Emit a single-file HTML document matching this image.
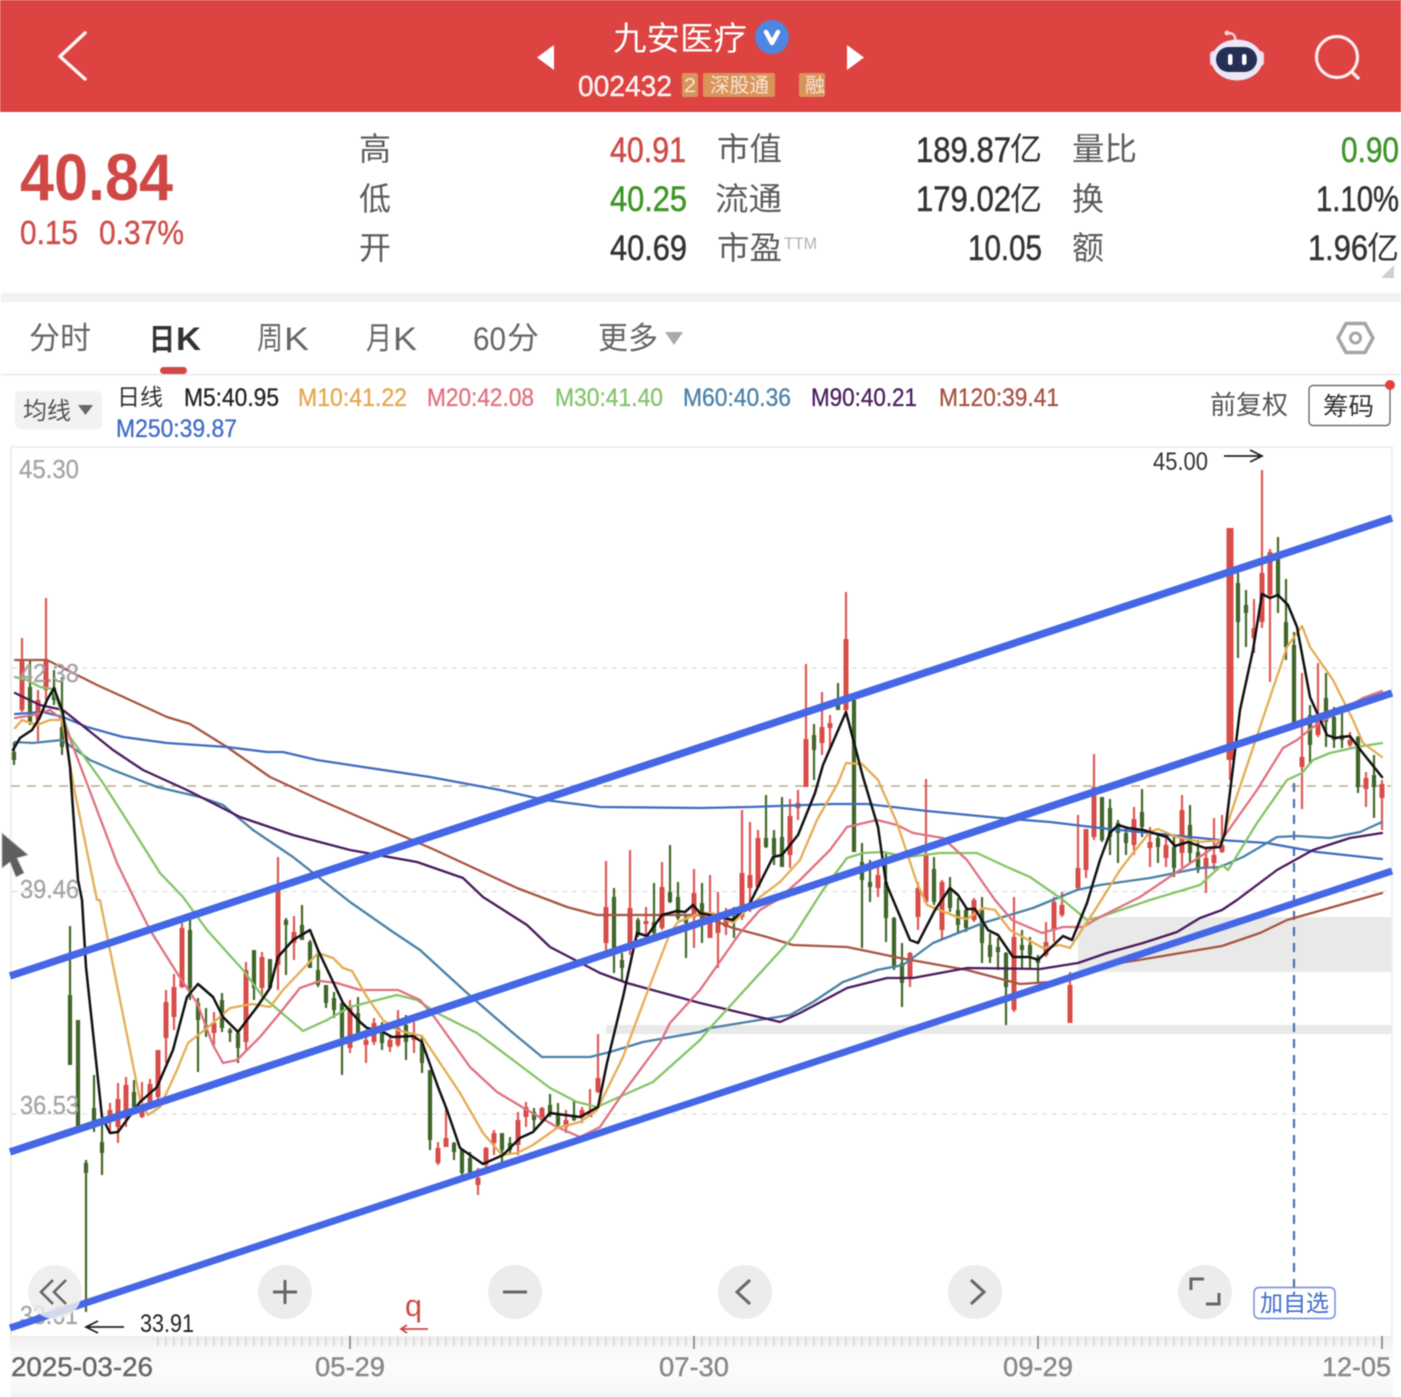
<!DOCTYPE html>
<html lang="zh">
<head>
<meta charset="utf-8">
<title>九安医疗</title>
<style>
html,body{margin:0;padding:0;background:#fff;width:1401px;height:1397px;overflow:hidden}
svg{display:block;filter:blur(.45px)}
text{font-family:"Liberation Sans","Noto Sans CJK SC",sans-serif}
.c{font-family:"Noto Sans CJK SC","Liberation Sans",sans-serif}
</style>
</head>
<body>
<svg width="1401" height="1397" viewBox="0 0 1401 1397" xmlns="http://www.w3.org/2000/svg">
<defs>
<linearGradient id="axis" x1="0" y1="0" x2="0" y2="1">
<stop offset="0" stop-color="#efefef"/>
<stop offset=".28" stop-color="#fafafa"/>
<stop offset=".55" stop-color="#fcfcfc"/>
<stop offset="1" stop-color="#f6f6f6"/>
</linearGradient>
</defs>
<rect width="1401" height="1397" fill="#fff"/>

<!-- header -->
<rect width="1401" height="112" fill="#dc4341"/>
<path d="M85 33L60 56.500L85 79" fill="none" stroke="#fff" stroke-width="3.500" stroke-linecap="round" stroke-linejoin="round" opacity=".95"/>
<path d="M537 57.500L554 45V70Z" fill="#fff"/>
<path d="M847 45L864 57.500L847 70Z" fill="#fff"/>
<text class="c" x="613" y="50" font-size="33" fill="#fff" textLength="134" lengthAdjust="spacingAndGlyphs">九安医疗</text>
<circle cx="772" cy="37" r="17" fill="#4e86e2"/>
<path d="M766 32L772 43L778 32" fill="none" stroke="#fff" stroke-width="4.500" stroke-linejoin="round" stroke-linecap="round"/>
<text x="578" y="96" font-size="29" fill="#fdf2f0" stroke="#fdf2f0" stroke-width=".4" textLength="94" lengthAdjust="spacingAndGlyphs">002432</text>
<rect x="682" y="73" width="16" height="24" rx="2" fill="#d9945a"/>
<text x="684" y="92" font-size="20" fill="#f7e6d8" textLength="12" lengthAdjust="spacingAndGlyphs">2</text>
<rect x="703" y="73" width="72" height="24" rx="2" fill="#d9945a"/>
<text class="c" x="710" y="92" font-size="20" fill="#f7e6d8" textLength="59" lengthAdjust="spacingAndGlyphs">深股通</text>
<rect x="799" y="73" width="26" height="24" rx="2" fill="#d9945a"/>
<text class="c" x="805" y="92" font-size="20" fill="#f7e6d8" textLength="20" lengthAdjust="spacingAndGlyphs">融</text>

<!-- robot -->
<path d="M1235 41C1236 35 1233 33 1227 33" fill="none" stroke="#f6cfd4" stroke-width="2.500" stroke-linecap="round"/>
<circle cx="1227" cy="33" r="2.500" fill="#f6cfd4"/>
<rect x="1210" y="51" width="7" height="15" rx="3.500" fill="#efd4ea"/>
<rect x="1257" y="51" width="7" height="15" rx="3.500" fill="#efd4ea"/>
<ellipse cx="1237" cy="60" rx="25.500" ry="20.500" fill="#ece6f6"/>
<rect x="1216" y="47" width="41" height="25" rx="12.500" fill="#252f55"/>
<rect x="1228" y="54" width="4.500" height="11" rx="2.200" fill="#fff"/>
<rect x="1242" y="54" width="4.500" height="11" rx="2.200" fill="#fff"/>

<!-- search -->
<circle cx="1337" cy="57" r="20.500" fill="none" stroke="#fdecec" stroke-width="3.200"/>
<path d="M1352 72L1358 78" stroke="#fdecec" stroke-width="3.500" stroke-linecap="round"/>

<!-- quote block -->
<text x="20" y="200" font-size="66" font-weight="700" fill="#d04845" textLength="153" lengthAdjust="spacingAndGlyphs">40.84</text>
<text x="20" y="244" font-size="33" fill="#cd4f4b" stroke="#cd4f4b" stroke-width=".4" textLength="58" lengthAdjust="spacingAndGlyphs">0.15</text>
<text x="99" y="244" font-size="33" fill="#cd4f4b" stroke="#cd4f4b" stroke-width=".4" textLength="85" lengthAdjust="spacingAndGlyphs">0.37%</text>

<g class="c" font-size="32" fill="#5c5c5c">
<text class="c" x="359" y="160">高</text>
<text class="c" x="359" y="210">低</text>
<text class="c" x="359" y="259">开</text>
<text class="c" x="717" y="160" textLength="65" lengthAdjust="spacingAndGlyphs">市值</text>
<text class="c" x="715" y="210" textLength="67" lengthAdjust="spacingAndGlyphs">流通</text>
<text class="c" x="717" y="259" textLength="65" lengthAdjust="spacingAndGlyphs">市盈</text>
<text class="c" x="1072" y="160" textLength="65" lengthAdjust="spacingAndGlyphs">量比</text>
<text class="c" x="1072" y="210">换</text>
<text class="c" x="1072" y="259">额</text>
</g>
<text x="784" y="249" font-size="17" fill="#b0b0b0" textLength="33" lengthAdjust="spacingAndGlyphs">TTM</text>
<g font-size="35" stroke-width=".5">
<text x="610" y="162" fill="#cd4b47" stroke="#cd4b47" textLength="76" lengthAdjust="spacingAndGlyphs">40.91</text>
<text x="610" y="211" fill="#3f9428" stroke="#3f9428" textLength="77" lengthAdjust="spacingAndGlyphs">40.25</text>
<text x="610" y="260" fill="#333" stroke="#333" textLength="77" lengthAdjust="spacingAndGlyphs">40.69</text>
<text x="916" y="162" fill="#333" stroke="#333" textLength="95" lengthAdjust="spacingAndGlyphs">189.87</text>
<text x="916" y="211" fill="#333" stroke="#333" textLength="95" lengthAdjust="spacingAndGlyphs">179.02</text>
<text x="968" y="260" fill="#333" stroke="#333" textLength="74" lengthAdjust="spacingAndGlyphs">10.05</text>
<text x="1341" y="162" fill="#3f9428" stroke="#3f9428" textLength="58" lengthAdjust="spacingAndGlyphs">0.90</text>
<text x="1316" y="211" fill="#333" stroke="#333" textLength="83" lengthAdjust="spacingAndGlyphs">1.10%</text>
<text x="1308" y="260" fill="#333" stroke="#333" textLength="60" lengthAdjust="spacingAndGlyphs">1.96</text>
</g>
<g font-size="32" fill="#333">
<text class="c" x="1010" y="160">亿</text>
<text class="c" x="1010" y="210">亿</text>
<text class="c" x="1367" y="259">亿</text>
</g>
<path d="M1394 265L1381 278H1394Z" fill="#cfcfcf"/>

<rect x="1" y="293" width="1400" height="9" fill="#f2f2f2"/>

<!-- tabs -->
<g font-size="31" fill="#666">
<text class="c" x="29" y="349" textLength="62" lengthAdjust="spacingAndGlyphs">分时</text>
<text class="c" x="257" y="349" textLength="26" lengthAdjust="spacingAndGlyphs">周</text>
<text x="284" y="350" font-size="32" textLength="25" lengthAdjust="spacingAndGlyphs">K</text>
<text class="c" x="366" y="349" textLength="26" lengthAdjust="spacingAndGlyphs">月</text>
<text x="393" y="350" font-size="32" textLength="24" lengthAdjust="spacingAndGlyphs">K</text>
<text x="473" y="350" font-size="32" textLength="33" lengthAdjust="spacingAndGlyphs">60</text>
<text class="c" x="507" y="349" textLength="32" lengthAdjust="spacingAndGlyphs">分</text>
<text class="c" x="598" y="349" textLength="60" lengthAdjust="spacingAndGlyphs">更多</text>
</g>
<text class="c" x="149" y="350" font-size="30" font-weight="700" fill="#333" textLength="26" lengthAdjust="spacingAndGlyphs">日</text>
<text x="176" y="350" font-size="32" font-weight="700" fill="#333" textLength="25" lengthAdjust="spacingAndGlyphs">K</text>
<path d="M665 332H683L674 345Z" fill="#aaa"/>
<rect x="160" y="367" width="27" height="7" rx="3.500" fill="#d04a45"/>
<path d="M1346 323.500H1365L1373 338L1365 352.500H1346L1338 338Z" fill="none" stroke="#a5a5a5" stroke-width="3.500" stroke-linejoin="round"/>
<circle cx="1355.500" cy="338" r="5" fill="none" stroke="#a5a5a5" stroke-width="3"/>
<rect x="1" y="374" width="1400" height="1.500" fill="#e8e8e8"/>

<!-- MA row -->
<rect x="15" y="391" width="87" height="38" rx="5" fill="#f2f2f2"/>
<text class="c" x="23" y="419" font-size="24" fill="#555" textLength="48" lengthAdjust="spacingAndGlyphs">均线</text>
<path d="M78 405H93L85.500 415Z" fill="#666"/>
<text class="c" x="117" y="405" font-size="23" fill="#333" textLength="46" lengthAdjust="spacingAndGlyphs">日线</text>
<g font-size="25" stroke-width=".3">
<text x="184" y="406" fill="#222" stroke="#222" textLength="95" lengthAdjust="spacingAndGlyphs">M5:40.95</text>
<text x="298" y="406" fill="#e2a84f" stroke="#e2a84f" textLength="109" lengthAdjust="spacingAndGlyphs">M10:41.22</text>
<text x="427" y="406" fill="#e0707e" stroke="#e0707e" textLength="107" lengthAdjust="spacingAndGlyphs">M20:42.08</text>
<text x="555" y="406" fill="#82c46a" stroke="#82c46a" textLength="108" lengthAdjust="spacingAndGlyphs">M30:41.40</text>
<text x="683" y="406" fill="#4a80a8" stroke="#4a80a8" textLength="108" lengthAdjust="spacingAndGlyphs">M60:40.36</text>
<text x="811" y="406" fill="#4b1a5e" stroke="#4b1a5e" textLength="106" lengthAdjust="spacingAndGlyphs">M90:40.21</text>
<text x="939" y="406" fill="#a85040" stroke="#a85040" textLength="120" lengthAdjust="spacingAndGlyphs">M120:39.41</text>
<text x="116" y="437" fill="#3f6cc8" stroke="#3f6cc8" textLength="121" lengthAdjust="spacingAndGlyphs">M250:39.87</text>
</g>
<text class="c" x="1210" y="414" font-size="26" fill="#555" textLength="78" lengthAdjust="spacingAndGlyphs">前复权</text>
<rect x="1309" y="385.500" width="81" height="40" rx="4" fill="#fff" stroke="#555" stroke-width="1.200"/>
<text class="c" x="1323" y="415" font-size="25" fill="#333" textLength="51" lengthAdjust="spacingAndGlyphs">筹码</text>
<circle cx="1390" cy="385" r="5" fill="#e5403e"/>

<!-- chart frame -->
<rect x="10" y="446" width="1383" height="2" fill="#eee"/>
<rect x="10" y="446" width="2" height="890" fill="#eee"/>
<rect x="1391" y="446" width="2" height="890" fill="#eee"/>

<!-- grid -->
<g stroke="#ddd" stroke-width="1.200" stroke-dasharray="5 5" fill="none">
<path d="M12 668H1391"/><path d="M12 891.500H1391"/><path d="M12 1114H1391"/>
</g>
<path d="M11 786H1391" stroke="#b9aa8a" stroke-width="1.500" stroke-dasharray="9 7" fill="none"/>

<!-- support bands -->
<rect x="1078" y="917" width="313" height="55" fill="#e9e9e9"/>
<rect x="606" y="1025" width="785" height="9" fill="#e9e9e9"/>

<!-- candle wicks -->
<path fill="none" stroke="#de5a56" stroke-width="2.200" d="M22 638V712M38 690V741M46 598V700M110 1103V1133M118 1083V1143M126 1077V1127M142 1082V1118M150 1079V1107M158 1050V1100M166 990V1063M174 974V1030M182 923V988M214 1012V1045M246 962V1050M262 952V997M278 857V990M294 916V960M350 1000V1053M366 1030V1063M374 1018V1045M390 1037V1052M398 1010V1047M414 1022V1053M438 1142V1165M446 1108V1147M478 1168V1195M486 1147V1167M494 1130V1155M518 1112V1155M526 1102V1127M542 1107V1122M566 1110V1133M582 1107V1123M590 1089V1117M598 1034V1093M606 861V952M630 850V955M646 907V935M662 862V930M694 869V948M710 875V938M718 892V968M726 908V935M742 810V920M750 822V912M758 830V888M790 799V868M798 790V820M806 664V787M822 692V755M830 715V750M846 592V712M878 867V897M910 952V987M918 882V930M926 779V903M942 880V939M974 898V922M1014 897V1012M1046 922V957M1054 897V942M1062 892V917M1070 972V1023M1078 815V890M1086 829V878M1094 754V840M1134 807V855M1150 827V867M1166 833V867M1182 795V867M1206 847V893M1214 818V870M1222 815V853M1230 528V780M1254 599V653M1262 470V628M1270 549V682M1302 673V809M1318 663V737M1350 732V747M1366 772V807M1382 780V830"/>
<path fill="none" stroke="#44692c" stroke-width="2.200" d="M14 742V765M30 660V725M54 670V705M62 677V755M70 926V1065M78 1020V1127M86 1160V1312M94 1075V1132M102 1123V1175M134 1080V1107M190 920V1000M198 998V1072M206 1008V1037M222 993V1032M230 1028V1042M238 1032V1063M254 950V1000M270 959V988M286 918V975M302 905V940M310 940V968M318 950V987M326 985V1008M334 992V1018M342 1003V1075M358 997V1033M382 1022V1050M406 1015V1060M422 1037V1073M430 1070V1150M454 1142V1160M462 1150V1175M470 1152V1175M502 1133V1162M510 1137V1153M534 1108V1130M550 1094V1117M558 1103V1127M574 1100V1121M614 888V973M622 953V982M638 918V937M654 883V935M670 845V903M678 882V920M686 915V958M702 883V943M734 907V938M766 795V848M774 830V865M782 797V867M814 724V780M838 683V710M854 700V852M862 843V948M870 860V902M886 853V942M894 917V970M902 943V1007M934 857V905M950 877V912M958 898V933M966 908V932M982 897V963M990 933V963M998 938V970M1006 952V1025M1022 930V968M1030 937V968M1038 955V983M1102 797V842M1110 799V855M1118 820V863M1126 827V855M1142 789V837M1158 833V863M1174 835V877M1190 805V863M1198 840V873M1238 573V658M1246 590V647M1278 537V613M1286 579V660M1294 632V723M1310 705V763M1326 673V747M1334 707V748M1342 712V748M1358 736V793M1374 755V818"/>
<!-- candle bodies -->
<path fill="none" stroke="#d94d49" stroke-width="5" d="M22 660V710M38 700V720M46 660V690M110 1110V1117M118 1099V1127M126 1085V1118M142 1110V1117M150 1084V1103M158 1050V1097M166 1002V1038M174 987V1017M182 928V987M214 1023V1033M246 970V1042M262 957V988M278 885V965M294 932V943M350 1007V1048M366 1040V1045M374 1023V1042M390 1040V1047M398 1028V1045M414 1035V1040M438 1148V1163M446 1138V1147M478 1178V1185M486 1148V1165M494 1133V1143M518 1120V1145M526 1107V1117M542 1108V1120M566 1120V1127M582 1110V1117M590 1113V1117M598 1078V1092M606 907V943M630 908V947M646 921V924M662 887V928M694 893V917M710 913V938M718 920V933M726 918V927M742 873V917M750 875V888M758 838V887M790 816V855M798 803V808M806 739V787M822 727V743M830 723V728M846 639V710M878 875V888M910 953V977M918 888V917M926 855V902M942 882V930M974 900V920M1014 937V1010M1046 942V955M1054 902V930M1062 905V915M1070 985V1023M1078 868V888M1086 829V870M1094 787V837M1134 819V845M1150 842V848M1166 845V858M1182 810V853M1206 858V868M1214 855V863M1222 845V852M1254 628V638M1262 573V622M1270 552V595M1302 757V767M1318 722V735M1350 740V745M1366 778V789M1382 784V798"/>
<rect x="1226.500" y="528" width="7" height="232" fill="#d94d49"/>
<path fill="none" stroke="#40662a" stroke-width="4.200" d="M14 752V760M30 687V723M54 688V700M62 727V747M70 995V1065M78 1020V1127M86 1163V1173M94 1108V1122M102 1142V1153M134 1092V1107M190 930V988M198 1003V1020M206 1025V1030M222 1000V1028M230 1030V1033M238 1033V1048M254 950V988M270 959V988M286 920V925M302 925V940M310 942V968M318 970V985M326 985V1003M334 998V1010M342 1003V1038M358 1013V1033M382 1025V1043M406 1025V1042M422 1043V1063M430 1070V1140M454 1143V1152M462 1150V1173M470 1158V1173M502 1133V1150M510 1143V1150M534 1112V1120M550 1105V1115M558 1113V1125M574 1117V1120M614 897V948M622 960V968M638 920V933M654 922V933M670 892V902M678 897V918M686 917V923M702 903V920M734 917V920M766 838V847M774 838V855M782 837V867M814 735V750M838 705V710M854 700V852M862 862V880M870 882V887M886 882V918M894 918V968M902 963V983M934 869V902M950 888V908M958 910V925M966 910V928M982 910V943M990 945V957M998 947V952M1006 953V987M1022 945V950M1030 945V955M1038 957V963M1102 797V840M1110 808V837M1118 823V833M1126 833V843M1142 812V827M1158 838V847M1174 847V868M1190 825V853M1198 852V870M1238 583V622M1246 605V613M1278 553V595M1286 622V647M1294 645V723M1310 715V745M1326 698V722M1334 717V740M1342 735V740M1358 737V787M1374 775V787"/>

<!-- blue dashed marker -->
<path d="M1294 783V1287" stroke="#4f6fa8" stroke-width="2.200" stroke-dasharray="9 7" fill="none"/>

<!-- moving averages -->
<g fill="none" stroke-linejoin="round" stroke-linecap="round">
<polyline stroke="#a85443" stroke-width="2.300" points="15,660 47,660 97,685 130,700 167,717 190,724 227,747 270,777 320,800 350,813 435,850 517,888 567,907 597,915 700,915 733,928 767,937 793,945 847,947 900,958 967,970 1020,984 1050,982 1085,973 1120,963 1157,957 1222,946 1260,933 1287,920 1340,905 1382,893"/>
<polyline stroke="#3f6cc0" stroke-width="2.300" points="15,714 43,712 63,717 87,727 123,737 167,743 227,747 267,752 283,752 317,760 350,765 430,777 500,790 545,800 600,807 700,808 750,807 833,804 867,804 927,811 1000,818 1050,822 1100,828 1150,833 1220,840 1267,843 1317,852 1382,859"/>
<polyline stroke="#4a80a8" stroke-width="2.300" points="15,742 33,743 62,740 90,760 113,770 157,787 200,797 223,805 253,830 293,857 350,902 393,932 420,950 467,993 513,1033 542,1057 590,1057 610,1052 643,1042 700,1032 710,1028 790,1015 813,1002 843,982 877,970 903,965 933,943 983,923 1033,908 1077,890 1100,885 1150,878 1200,868 1220,867 1243,857 1277,837 1297,836 1330,838 1360,832 1382,822"/>
<polyline stroke="#4b1a5e" stroke-width="2.300" points="15,693 40,705 63,710 113,750 143,770 187,790 240,817 293,835 350,850 417,862 463,878 483,897 527,925 550,947 600,973 627,983 700,1003 780,1022 800,1013 847,988 887,978 913,978 967,968 1040,969 1078,963 1107,953 1143,943 1177,932 1200,918 1222,910 1237,900 1277,870 1313,850 1350,838 1382,833"/>
<polyline stroke="#85c466" stroke-width="2.300" points="15,677 27,680 40,687 53,689 70,737 103,783 133,830 160,873 183,897 207,930 243,970 263,997 303,1031 327,1020 350,1007 397,995 417,1000 437,1013 477,1033 513,1060 550,1088 577,1102 597,1107 617,1098 653,1082 700,1040 710,1028 793,937 823,890 847,858 863,853 883,852 907,857 940,853 977,853 1007,867 1030,877 1063,900 1087,920 1100,917 1150,900 1200,885 1222,865 1228,870 1257,823 1287,780 1302,773 1313,760 1330,753 1357,747 1382,743"/>
<polyline stroke="#df7280" stroke-width="2.300" points="15,718 33,715 50,710 63,720 83,773 117,863 135,900 150,930 177,973 197,1003 213,1045 223,1063 237,1060 260,1037 280,1013 300,988 320,981 337,983 360,990 398,990 420,1000 435,1018 470,1067 497,1092 527,1110 557,1127 580,1137 600,1127 623,1093 660,1043 670,1023 700,990 740,933 760,910 777,900 800,880 830,850 847,827 877,820 897,825 913,833 943,838 967,860 995,900 1012,920 1042,933 1063,927 1083,927 1100,917 1140,897 1180,870 1213,848 1223,838 1257,790 1283,748 1297,740 1313,727 1333,715 1363,698 1382,691"/>
<polyline stroke="#e5ad55" stroke-width="2.300" points="15,728 22,720 37,725 50,720 62,720 75,793 97,900 100,900 120,1000 140,1100 148,1115 160,1107 177,1070 188,1043 207,1028 230,1008 252,1004 270,1007 283,990 318,953 333,958 343,968 352,971 367,997 383,1020 397,1030 422,1036 460,1093 483,1133 502,1155 517,1153 533,1145 557,1128 580,1122 597,1110 623,1057 647,993 670,933 678,922 700,913 713,913 733,923 760,897 780,882 800,860 817,820 838,783 846,763 862,764 878,780 897,823 917,883 927,905 957,917 967,919 983,908 995,910 1010,930 1043,948 1060,945 1070,948 1097,907 1120,870 1133,853 1150,832 1158,829 1177,837 1200,842 1222,840 1260,727 1287,647 1302,626 1310,647 1333,680 1353,720 1363,743 1382,757"/>
<polyline stroke="#111" stroke-width="2.500" points="13,750 20,738 32,730 40,717 47,700 54,688 63,713 70,767 78,880 82,900 86,967 102,1117 110,1133 118,1132 140,1102 157,1087 173,1050 187,997 198,984 213,997 223,1017 238,1032 257,1007 270,988 278,957 293,940 310,930 318,950 343,1003 360,1022 367,1028 383,1032 392,1037 413,1036 422,1042 438,1087 447,1110 460,1148 483,1164 503,1155 520,1138 533,1132 550,1113 580,1117 598,1107 607,1063 623,997 637,933 647,936 662,915 677,911 685,912 693,905 700,913 733,920 750,903 773,857 782,855 798,835 815,793 823,765 846,712 863,777 878,827 886,883 910,940 918,943 935,910 950,888 958,895 967,909 975,909 988,930 998,935 1013,957 1030,957 1038,960 1063,936 1072,940 1087,903 1100,860 1110,833 1118,825 1128,828 1143,830 1167,837 1175,846 1188,842 1205,848 1220,847 1225,833 1240,710 1253,650 1262,594 1270,598 1278,595 1288,605 1297,627 1310,697 1327,735 1335,738 1350,736 1362,752 1382,777"/>
</g>

<!-- axis labels -->
<g font-size="26" fill="#a4a4a4" stroke="#a4a4a4" stroke-width=".3">
<text x="19" y="478" textLength="60" lengthAdjust="spacingAndGlyphs">45.30</text>
<text x="20" y="682" textLength="59" lengthAdjust="spacingAndGlyphs">42.38</text>
<text x="20" y="898" textLength="59" lengthAdjust="spacingAndGlyphs">39.46</text>
<text x="20" y="1114" textLength="59" lengthAdjust="spacingAndGlyphs">36.53</text>
<text x="20" y="1324" textLength="58" lengthAdjust="spacingAndGlyphs">33.61</text>
</g>

<!-- trend channel -->
<g fill="none" stroke="#4567e6">
<path stroke-width="7.500" d="M10 976L1392 518"/>
<path stroke-width="7.500" d="M10 1152L1392 693"/>
<path stroke-width="7" d="M10 1328L1392 871"/>
</g>

<!-- annotations -->
<text x="1153" y="470" font-size="25" fill="#333" textLength="55" lengthAdjust="spacingAndGlyphs">45.00</text>
<path d="M1224 456H1261M1250 450L1262 456L1250 462" fill="none" stroke="#222" stroke-width="1.800"/>
<text x="140" y="1332" font-size="25" fill="#222" textLength="54" lengthAdjust="spacingAndGlyphs">33.91</text>
<path d="M124 1327H87M98 1321L86 1327L98 1333" fill="none" stroke="#222" stroke-width="1.800"/>
<text x="405" y="1316" font-size="31" fill="#cc4a48" textLength="17" lengthAdjust="spacingAndGlyphs">q</text>
<path d="M428 1329H402M407 1325L401 1329L407 1333" fill="none" stroke="#cc4a48" stroke-width="1.800"/>

<!-- buttons -->
<g fill="#ececec">
<circle cx="55" cy="1292" r="27" fill-opacity=".85"/>
<circle cx="285" cy="1292" r="27"/>
<circle cx="515" cy="1292" r="27"/>
<circle cx="745" cy="1292" r="27"/>
<circle cx="975" cy="1292" r="27"/>
<circle cx="1205" cy="1292" r="27"/>
</g>
<g fill="none" stroke="#666" stroke-width="3">
<path d="M53 1280L41 1292L53 1304M66 1280L54 1292L66 1304" stroke-width="2.600"/>
<path d="M273 1292H297M285 1280V1304"/>
<path d="M503 1292H527"/>
<path d="M750 1280L737 1292L750 1304"/>
<path d="M971 1280L984 1292L971 1304"/>
<path d="M1191 1290V1279H1204M1219 1293V1304H1206"/>
</g>
<rect x="1254" y="1287.500" width="81" height="31" rx="5" fill="#fff" stroke="#6a8ad8" stroke-width="1.400"/>
<text class="c" x="1260" y="1311" font-size="23" fill="#3f6cc8" textLength="69" lengthAdjust="spacingAndGlyphs">加自选</text>

<!-- time axis -->
<rect x="10" y="1336" width="1383" height="60" fill="url(#axis)"/>
<rect x="10" y="1395" width="1383" height="2" fill="#f0f0f0"/>
<path fill="none" stroke="#c4c4c4" stroke-width="1" d="M158 1337V1346M166 1337V1346M174 1337V1346M182 1337V1346M190 1337V1346M198 1337V1346M206 1337V1346M214 1337V1346M222 1337V1346M230 1337V1346M238 1337V1346M246 1337V1346M254 1337V1346M262 1337V1346M270 1337V1346M278 1337V1346M286 1337V1346M294 1337V1346M302 1337V1346M310 1337V1346M318 1337V1346M326 1337V1346M334 1337V1346M342 1337V1346M358 1337V1346M366 1337V1346M374 1337V1346M382 1337V1346M390 1337V1346M398 1337V1346M406 1337V1346M414 1337V1346M422 1337V1346M430 1337V1346M438 1337V1346M446 1337V1346M454 1337V1346M462 1337V1346M470 1337V1346M478 1337V1346M486 1337V1346M494 1337V1346M502 1337V1346M510 1337V1346M518 1337V1346M526 1337V1346M534 1337V1346M542 1337V1346M550 1337V1346M558 1337V1346M566 1337V1346M574 1337V1346M582 1337V1346M590 1337V1346M598 1337V1346M606 1337V1346M614 1337V1346M622 1337V1346M630 1337V1346M638 1337V1346M646 1337V1346M654 1337V1346M662 1337V1346M670 1337V1346M678 1337V1346M686 1337V1346M702 1337V1346M710 1337V1346M718 1337V1346M726 1337V1346M734 1337V1346M742 1337V1346M750 1337V1346M758 1337V1346M766 1337V1346M774 1337V1346M782 1337V1346M790 1337V1346M798 1337V1346M806 1337V1346M814 1337V1346M822 1337V1346M830 1337V1346M838 1337V1346M846 1337V1346M854 1337V1346M862 1337V1346M870 1337V1346M878 1337V1346M886 1337V1346M894 1337V1346M902 1337V1346M910 1337V1346M918 1337V1346M926 1337V1346M934 1337V1346M942 1337V1346M950 1337V1346M958 1337V1346M966 1337V1346M974 1337V1346M982 1337V1346M990 1337V1346M998 1337V1346M1006 1337V1346M1014 1337V1346M1022 1337V1346M1030 1337V1346M1046 1337V1346M1054 1337V1346M1062 1337V1346M1070 1337V1346M1078 1337V1346M1086 1337V1346M1094 1337V1346M1102 1337V1346M1110 1337V1346M1118 1337V1346M1126 1337V1346M1134 1337V1346M1142 1337V1346M1150 1337V1346M1158 1337V1346M1166 1337V1346M1174 1337V1346M1182 1337V1346M1190 1337V1346M1198 1337V1346M1206 1337V1346M1214 1337V1346M1222 1337V1346M1230 1337V1346M1238 1337V1346M1246 1337V1346M1254 1337V1346M1262 1337V1346M1270 1337V1346M1278 1337V1346M1286 1337V1346M1294 1337V1346M1302 1337V1346M1310 1337V1346M1318 1337V1346M1326 1337V1346M1334 1337V1346M1342 1337V1346M1350 1337V1346M1358 1337V1346M1366 1337V1346M1374 1337V1346"/>
<path fill="none" stroke="#777" stroke-width="1.500" d="M350 1336V1349M694 1336V1349M1038 1336V1349M1382 1336V1349"/>
<g font-size="27" stroke-width=".4">
<text x="11" y="1376" fill="#666" stroke="#666" textLength="142" lengthAdjust="spacingAndGlyphs">2025-03-26</text>
<text x="315" y="1376" fill="#888" stroke="#888" textLength="70" lengthAdjust="spacingAndGlyphs">05-29</text>
<text x="659" y="1376" fill="#888" stroke="#888" textLength="70" lengthAdjust="spacingAndGlyphs">07-30</text>
<text x="1003" y="1376" fill="#888" stroke="#888" textLength="70" lengthAdjust="spacingAndGlyphs">09-29</text>
<text x="1322" y="1376" fill="#888" stroke="#888" textLength="69" lengthAdjust="spacingAndGlyphs">12-05</text>
</g>

<!-- mouse pointer -->
<path d="M2 833L28 855L17 858L24 873L16 877L10 862L2 868Z" fill="#5f5f5f" stroke="#bbb" stroke-width=".800"/>
</svg>
</body>
</html>
